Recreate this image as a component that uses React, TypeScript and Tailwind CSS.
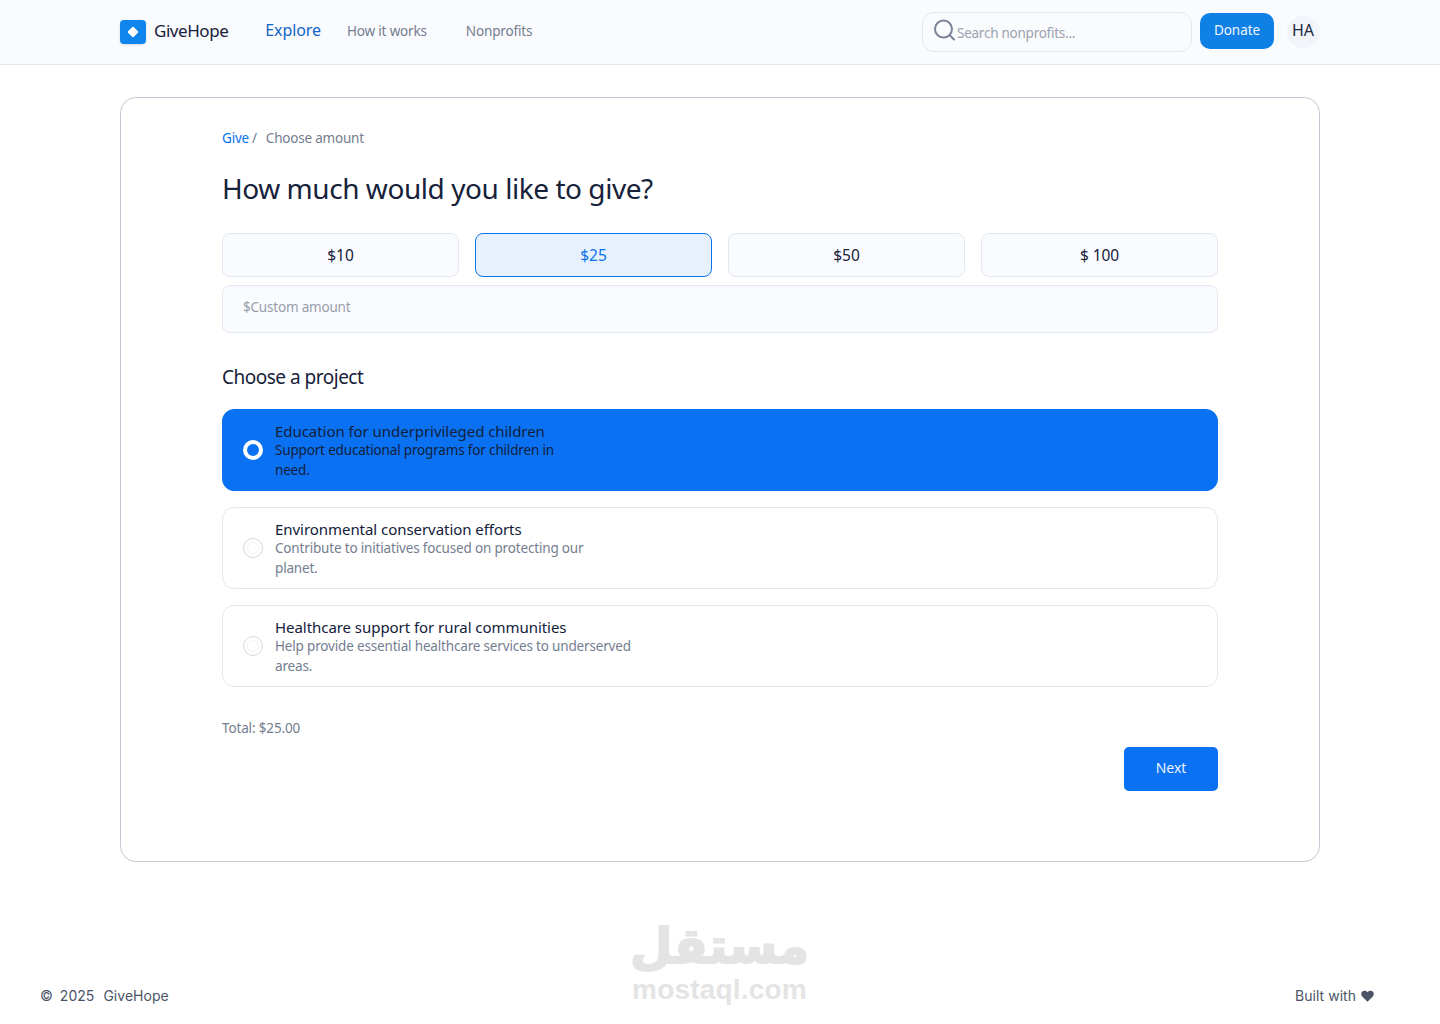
import React from "react";

const amounts = [
  { label: "$10", active: false },
  { label: "$25", active: true },
  { label: "$50", active: false },
  { label: "$ 100", active: false },
];

const projects = [
  { title: "Education for underprivileged children", line1: "Support educational programs for children in", line2: "need.", active: true },
  { title: "Environmental conservation efforts", line1: "Contribute to initiatives focused on protecting our", line2: "planet.", active: false },
  { title: "Healthcare support for rural communities", line1: "Help provide essential healthcare services to underserved", line2: "areas.", active: false },
];

export default function App() {
  return (
    <div className="relative min-h-[1024px] bg-white font-['Noto_Sans',sans-serif] text-[#0f1b33]">
      <header className="h-[65px] border-b border-[#e2e8f0] bg-[#fafbfe]">
        <div className="mx-auto flex h-16 w-[1200px] items-center">
          <div className="flex h-6 w-[26px] items-center justify-center rounded-[4px] bg-[#0f86ee] shadow-sm">
            <span className="h-2 w-2 rotate-45 rounded-[1px] bg-white" />
          </div>
          <span className="mb-[2px] ml-2 text-[17px] tracking-[-0.45px] text-[#16213a]">GiveHope</span>
          <nav className="flex items-center">
            <a className="mb-[4px] ml-[37px] text-[16px] tracking-[-0.1px] text-[#1264c8]">Explore</a>
            <a className="mb-[2px] ml-[26px] text-[13.5px] tracking-[-0.17px] text-[#747d8f]">How it works</a>
            <a className="mb-[2px] ml-[39px] text-[13.5px] tracking-[-0.15px] text-[#747d8f]">Nonprofits</a>
          </nav>
          <div className="ml-auto flex items-center">
            <div className="flex h-10 w-[270px] items-center rounded-xl border border-[#e2e8f0] bg-[#fafbfc] pl-[10px]">
              <svg width="23" height="23" viewBox="0 0 23 23" fill="none" stroke="#7b8496" strokeWidth="2" className="mb-[4px] shrink-0">
                <circle cx="10.5" cy="10" r="8.5" />
                <path d="M17 16.5l4 4" strokeLinecap="round" />
              </svg>
              <span className="mt-[2px] ml-[1px] text-[13.5px] tracking-[-0.25px] text-[#9aa2b1]">Search nonprofits...</span>
            </div>
            <button className="mb-[2px] ml-2 h-9 w-[74px] rounded-[10px] bg-[#0f80e6] pb-[2px] text-[13.5px] tracking-[-0.05px] text-[#eef6ff]">Donate</button>
            <div className="ml-[13px] flex h-8 w-[33px] items-center justify-center rounded-full bg-[#f1f4f8] pb-1 pr-[1px] text-[16px] text-[#1d2a44]">HA</div>
          </div>
        </div>
      </header>

      <main className="mx-auto mt-8 h-[765px] w-[1200px] rounded-2xl border border-[#c3cad5] bg-white px-[101px] pt-[30px]">
        <div className="flex h-[20px] items-center text-[13.5px] tracking-[-0.2px]">
          <span className="text-[#0b72f0]">Give</span>
          <span className="ml-[3px] text-[#747d8f]">/</span>
          <span className="ml-[9px] text-[#747d8f]">Choose amount</span>
        </div>
        <h1 className="mt-[20px] mb-[25px] text-[28px] leading-10 font-normal tracking-[-0.45px] text-[#16213a]">How much would you like to give?</h1>

        <div className="grid grid-cols-4 gap-4">
          {amounts.map((a) => (
            <button
              key={a.label}
              className={
                a.active
                  ? "h-11 rounded-lg border border-[#0b72f0] bg-[#e6f1fd] pt-[2px] text-[15.5px] tracking-[-0.1px] text-[#0b72f0]"
                  : "h-11 rounded-lg border border-[#e2e8f0] bg-[#fafbfe] pt-[2px] text-[15.5px] tracking-[-0.1px] text-[#16213a]"
              }
            >
              {a.label}
            </button>
          ))}
        </div>
        <div className="mt-2 flex h-12 items-center rounded-lg border border-[#e2e8f0] bg-[#fafbfe] pb-1 pl-5 text-[13.5px] tracking-[-0.2px] text-[#969eac]">
          $Custom amount
        </div>

        <h2 className="mt-[30px] text-[19px] leading-7 font-normal tracking-[-0.5px] text-[#16213a]">Choose a project</h2>

        <div className="mt-[18px] flex flex-col gap-4">
          {projects.map((p) => (
            <div
              key={p.title}
              className={
                p.active
                  ? "flex h-[82px] items-center rounded-xl border border-[#0a72f2] bg-[#0a72f2] pl-5"
                  : "flex h-[82px] items-center rounded-xl border border-[#e2e8f0] bg-white pl-5"
              }
            >
              {p.active ? (
                <span className="h-5 w-5 shrink-0 rounded-full border-[4px] border-white bg-[#0a72f2]" />
              ) : (
                <span className="flex h-5 w-5 shrink-0 items-center justify-center rounded-full border border-[#d5d9df] bg-white">
                  <span className="h-3 w-3 rounded-full border border-[#f1f3f5]" />
                </span>
              )}
              <div className="ml-3 flex flex-col pt-[2px]">
                <span className="text-[15px] leading-[18px] tracking-[-0.05px] text-[#12203a]">{p.title}</span>
                <span className={p.active ? "text-[13.5px] leading-5 tracking-[-0.17px] text-[#12203a]" : "text-[13.5px] leading-5 tracking-[-0.17px] text-[#747d8f]"}>
                  {p.line1}
                  <br />
                  {p.line2}
                </span>
              </div>
            </div>
          ))}
        </div>

        <div className="mt-[31px] text-[13.5px] leading-5 tracking-[-0.15px] text-[#747d8f]">Total: $25.00</div>
        <div className="mt-[9px] flex justify-end">
          <button className="h-11 w-[94px] rounded-[5px] bg-[#0a72f2] pb-1 text-[14px] tracking-[-0.1px] text-[#eaf3ff]">Next</button>
        </div>
      </main>

      <footer className="mt-[124px] flex items-center justify-between pl-10 pr-[66px] font-['Inter',sans-serif] text-[14px] leading-5 tracking-[0.03px] text-[#4b5567]">
        <span className="flex">
          <span>©</span>
          <span className="ml-[7px]">2025</span>
          <span className="ml-[9px]">GiveHope</span>
        </span>
        <span className="flex items-center gap-[5px]">
          Built with
          <svg width="13" height="12" viewBox="0 0 24 22" fill="#4b5567">
            <path d="M12 21.5 2.6 12.2C-.3 9.300-.3 5.400 2.300 2.900 4.900.4 9 .6 12 3.900c3-3.300 7.100-3.500 9.700-1 2.600 2.500 2.600 6.400-.3 9.300z" />
          </svg>
        </span>
      </footer>

      <div className="pointer-events-none absolute left-[632px] top-[916px] flex w-[175px] flex-col items-center text-[#e4e4e4]">
        <span dir="rtl" className="font-['DejaVu_Sans',sans-serif] text-[49px] leading-[62px] font-bold [-webkit-text-stroke:2px_#e4e4e4]">مستقل</span>
        <span className="-mt-[4px] font-['Liberation_Sans',sans-serif] text-[28px] leading-8 font-bold tracking-[0.2px]">mostaql.com</span>
      </div>
    </div>
  );
}
